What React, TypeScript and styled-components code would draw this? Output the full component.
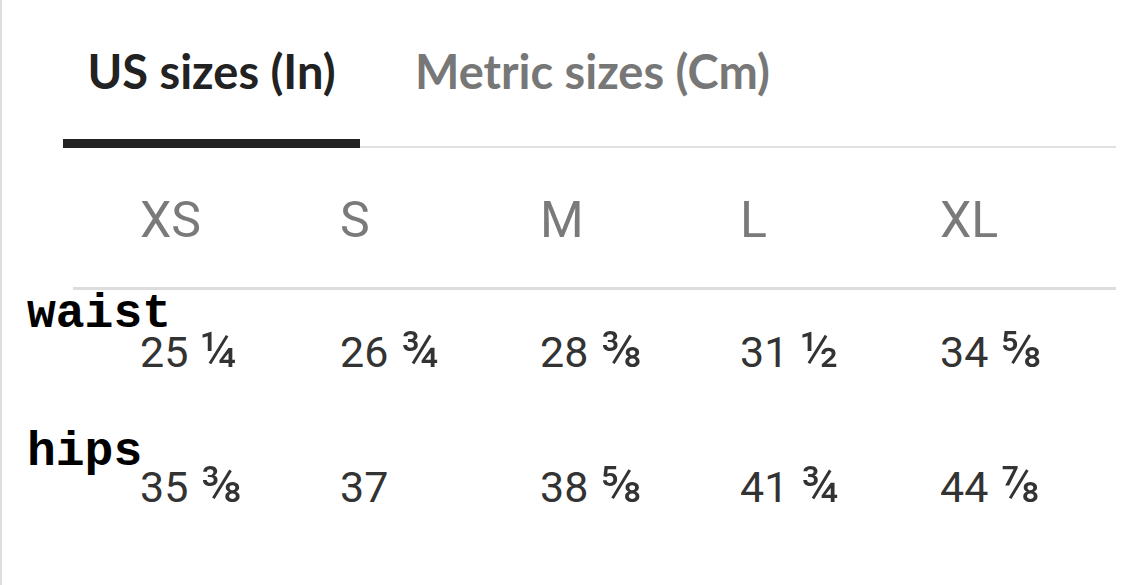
import React, { useState } from "react";
import styled, { createGlobalStyle } from "styled-components";

const GlobalStyle = createGlobalStyle`
  html, body {
    margin: 0;
    padding: 0;
    background: #fff;
  }
`;

type Measurement = {
  label: string;
  values: [string, string][];
};

const sizes = ["XS", "S", "M", "L", "XL"];

// whole part and fraction glyph
const measurements: Measurement[] = [
  {
    label: "waist",
    values: [["25", "¼"], ["26", "¾"], ["28", "⅜"], ["31", "½"], ["34", "⅝"]],
  },
  {
    label: "hips",
    values: [["35", "⅜"], ["37", ""], ["38", "⅝"], ["41", "¾"], ["44", "⅞"]],
  },
];

const Page = styled.div`
  height: 585px;
  box-sizing: border-box;
  border-left: 2px solid #dedede;
  overflow: hidden;
`;

const TabList = styled.div`
  display: flex;
  margin: 0 6px 0 61px;
  border-bottom: 2px solid #e2e2e2;
`;

const Tab = styled.button<{ active: boolean }>`
  all: unset;
  cursor: pointer;
  box-sizing: border-box;
  width: ${({ active }) => (active ? "297px" : "auto")};
  padding: 47px 0 44px ${({ active }) => (active ? "0" : "55px")};
  margin-bottom: -2px;
  text-align: ${({ active }) => (active ? "center" : "left")};
  font-family: Lato, "Open Sans", sans-serif;
  font-weight: 700;
  font-size: 47px;
  line-height: 48px;
  color: ${({ active }) => (active ? "#222" : "#777")};
  border-bottom: 9px solid ${({ active }) => (active ? "#222" : "transparent")};
`;

const HeaderRow = styled.div`
  display: grid;
  grid-template-columns: repeat(5, 200px);
  margin: 47px 6px 0 71px;
  padding: 0 0 42px 67px;
  border-bottom: 3px solid #dddddd;
`;

const SizeCell = styled.div`
  font-family: Roboto, "Liberation Sans", sans-serif;
  font-weight: 400;
  font-size: 50px;
  line-height: 50px;
  color: #7a7a7a;
`;

const MeasureBlock = styled.section<{ first: boolean }>`
  margin-top: ${({ first }) => (first ? "7px" : "65px")};
`;

const Label = styled.div`
  padding-left: 25px;
  font-family: "Courier New", "Liberation Mono", monospace;
  font-weight: 700;
  font-size: 48px;
  line-height: 34px;
  color: #000;
`;

const ValueRow = styled.div<{ gap: number }>`
  display: grid;
  grid-template-columns: repeat(5, 200px);
  margin-top: ${({ gap }) => gap}px;
  padding-left: 138px;
`;

const ValueCell = styled.div`
  font-family: Roboto, "Liberation Sans", sans-serif;
  font-size: 43px;
  line-height: 36px;
  color: #333;
  white-space: nowrap;
`;

const Fraction = styled.span`
  font-size: 1.15em;
  line-height: 0;
`;

export default function App() {
  const [unit, setUnit] = useState<"us" | "metric">("us");

  return (
    <>
      <GlobalStyle />
      <Page>
        <TabList>
          <Tab active={unit === "us"} onClick={() => setUnit("us")}>
            US sizes (In)
          </Tab>
          <Tab active={unit === "metric"} onClick={() => setUnit("metric")}>
            Metric sizes (Cm)
          </Tab>
        </TabList>
        <HeaderRow>
          {sizes.map((s) => (
            <SizeCell key={s}>{s}</SizeCell>
          ))}
        </HeaderRow>
        {measurements.map((m, i) => (
          <MeasureBlock key={m.label} first={i === 0}>
            <Label>{m.label}</Label>
            <ValueRow gap={i === 0 ? 3 : 0}>
              {m.values.map(([whole, frac], j) => (
                <ValueCell key={j}>
                  {whole}
                  {frac && <Fraction> {frac}</Fraction>}
                </ValueCell>
              ))}
            </ValueRow>
          </MeasureBlock>
        ))}
      </Page>
    </>
  );
}
